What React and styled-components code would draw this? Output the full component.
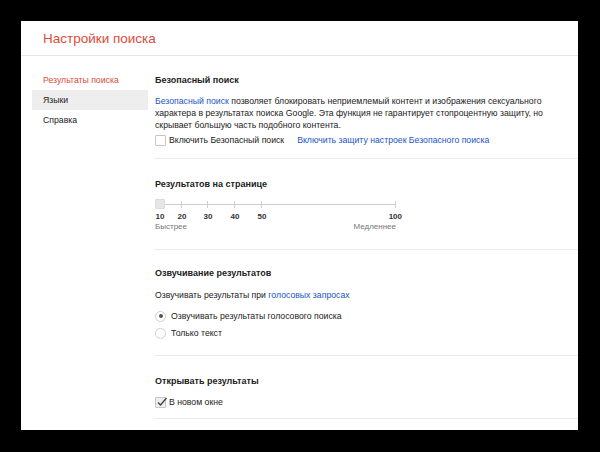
import styled, { createGlobalStyle } from "styled-components";

const Global = createGlobalStyle`
  html, body {
    margin: 0;
    background: #000;
  }
  body {
    font-family: "Liberation Sans", Arial, sans-serif;
    color: #222;
  }
`;

// Page frame
const Screen = styled.div`
  width: 600px;
  height: 452px;
  padding: 21px 22px 22px 21px;
  box-sizing: border-box;
  background: #000;
`;

const Page = styled.div`
  width: 557px;
  height: 409px;
  background: #fff;
  overflow: hidden;
  display: flex;
  flex-direction: column;
`;

const Header = styled.div`
  height: 34px;
  flex-shrink: 0;
  border-bottom: 1px solid #e5e5e5;
  display: flex;
  align-items: center;
  padding-left: 22px;
`;

const Title = styled.h1`
  margin: 0;
  font-size: 13.5px;
  font-weight: normal;
  color: #dd4b39;
`;

const Body = styled.div`
  display: flex;
  flex: 1;
`;

const Sidebar = styled.ul`
  list-style: none;
  margin: 0;
  padding: 14px 0 0 11px;
  width: 123px;
  flex-shrink: 0;
`;

const NavItem = styled.li`
  width: 116px;
  height: 20px;
  line-height: 20px;
  padding-left: 11px;
  box-sizing: border-box;
  font-size: 8.7px;
  color: ${(p) => (p.$active ? "#dd4b39" : "#222")};
  background: ${(p) => (p.$hover ? "#eeeeee" : "transparent")};
`;

const Content = styled.div`
  flex: 1;
  padding-top: 17px;
`;

const Section = styled.section`
  padding: ${(p) => p.$pad || "0 0 12px"};
  border-bottom: 1px solid #ebebeb;
`;

const Heading = styled.h2`
  margin: 0;
  font-size: 9px;
  line-height: 14px;
  font-weight: bold;
  color: #222;
`;

const Text = styled.p`
  margin: ${(p) => p.$m || "8px 0 0"};
  font-size: 8.7px;
  line-height: 12px;
  color: #222;
  white-space: nowrap;
`;

const Link = styled.a`
  color: #1a55c4;
  text-decoration: none;
`;

const Row = styled.div`
  display: flex;
  align-items: center;
  height: 12px;
  margin-top: ${(p) => p.$mt || "3px"};
  font-size: 8.7px;
  color: #222;
  white-space: nowrap;
`;

const Box = styled.span`
  width: 9px;
  height: 9px;
  border: 1px solid #c6c6c6;
  border-radius: 1px;
  background: ${(p) => (p.$checked ? "#eeeeee" : "#fff")};
  margin-right: 3px;
  position: relative;
  flex-shrink: 0;

  svg {
    position: absolute;
    left: 0;
    top: -2px;
  }
`;

const Radio = styled.span`
  width: 9px;
  height: 9px;
  border: 1px solid #d0d0d0;
  border-radius: 50%;
  margin-right: 5px;
  display: flex;
  align-items: center;
  justify-content: center;

  &::after {
    content: "";
    width: 4px;
    height: 4px;
    border-radius: 50%;
    background: ${(p) => (p.$checked ? "#555" : "transparent")};
  }
`;

const Spacer = styled.span`
  width: 13px;
`;

// Slider
const Slider = styled.div`
  width: 241px;
  margin-top: 8px;
`;

const Track = styled.div`
  position: relative;
  height: 11px;
  display: flex;
  align-items: center;
`;

const Line = styled.div`
  flex: 1;
  height: 1px;
  background: #cfcfcf;
`;

const Handle = styled.span`
  position: absolute;
  left: 0;
  top: 0;
  width: 10px;
  height: 10px;
  background: #e6e6e6;
  border: 1px solid #dcdcdc;
  border-radius: 1px;
  box-sizing: border-box;
`;

const Tick = styled.span`
  position: absolute;
  top: 2px;
  width: 1px;
  height: 7px;
  background: #cfcfcf;
`;

const Labels = styled.div`
  position: relative;
  height: 10px;
  margin-top: 2px;
  font-size: 8px;
  line-height: 10px;
  font-weight: bold;
  color: #333;
`;

const Num = styled.span`
  position: absolute;
  top: 0;
  transform: translateX(-50%);
`;

const Speed = styled.div`
  display: flex;
  justify-content: space-between;
  font-size: 8px;
  line-height: 9px;
  color: #777;
`;

const ticks = [
  { v: "10", x: 5 },
  { v: "20", x: 27 },
  { v: "30", x: 53 },
  { v: "40", x: 80 },
  { v: "50", x: 107 },
];

function CheckMark() {
  return (
    <svg width="12" height="12" viewBox="0 0 12 12">
      <path d="M2 6.5 L4.5 9 L10.5 2" fill="none" stroke="#444" strokeWidth="1.4" />
    </svg>
  );
}

export default function App() {
  return (
    <Screen>
      <Global />
      <Page>
        <Header>
          <Title>Настройки поиска</Title>
        </Header>
        <Body>
          <Sidebar>
            <NavItem $active>Результаты поиска</NavItem>
            <NavItem $hover>Языки</NavItem>
            <NavItem>Справка</NavItem>
          </Sidebar>
          <Content>
            <Section $pad="0 0 12px">
              <Heading>Безопасный поиск</Heading>
              <Text>
                <Link href="#">Безопасный поиск</Link> позволяет блокировать неприемлемый контент и изображения сексуального
                <br />
                характера в результатах поиска Google. Эта функция не гарантирует стопроцентную защиту, но
                <br />
                скрывает большую часть подобного контента.
              </Text>
              <Row $mt="3px">
                <Box />
                Включить Безопасный поиск
                <Spacer />
                <Link href="#">Включить защиту настроек Безопасного поиска</Link>
              </Row>
            </Section>

            <Section $pad="18px 0 18px">
              <Heading>Результатов на странице</Heading>
              <Slider>
                <Track>
                  <Line />
                  {ticks.slice(1).map((t) => (
                    <Tick key={t.v} style={{ left: t.x - 1 }} />
                  ))}
                  <Tick style={{ left: 240 }} />
                  <Handle />
                </Track>
                <Labels>
                  {ticks.map((t) => (
                    <Num key={t.v} style={{ left: t.x }}>
                      {t.v}
                    </Num>
                  ))}
                  <Num style={{ right: -6, transform: "none" }}>100</Num>
                </Labels>
                <Speed>
                  <span>Быстрее</span>
                  <span>Медленнее</span>
                </Speed>
              </Slider>
            </Section>

            <Section $pad="16px 0 16px">
              <Heading>Озвучивание результатов</Heading>
              <Text $m="9px 0 0">
                Озвучивать результаты при <Link href="#">голосовых запросах</Link>
              </Text>
              <Row $mt="9px">
                <Radio $checked />
                Озвучивать результаты голосового поиска
              </Row>
              <Row $mt="5px">
                <Radio />
                Только текст
              </Row>
            </Section>

            <Section $pad="18px 0 10px">
              <Heading>Открывать результаты</Heading>
              <Row $mt="8px">
                <Box $checked>
                  <CheckMark />
                </Box>
                В новом окне
              </Row>
            </Section>
          </Content>
        </Body>
      </Page>
    </Screen>
  );
}
